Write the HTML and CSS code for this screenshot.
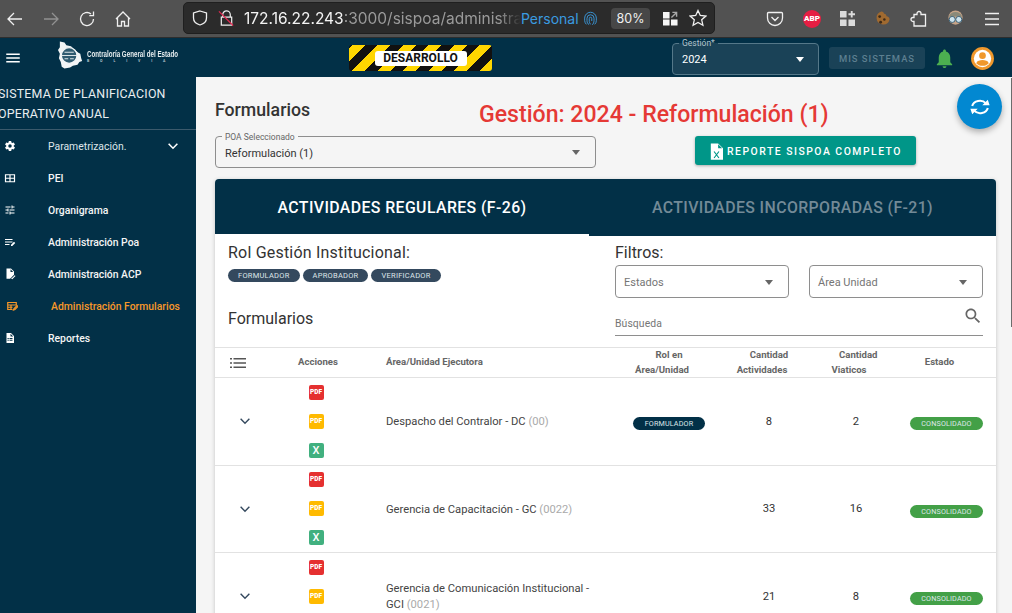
FILE: index.html
```html
<!DOCTYPE html>
<html lang="es">
<head>
<meta charset="utf-8">
<title>SISPOA</title>
<link rel="stylesheet" href="styles.css">
</head>
<body>
<div class="browser">
  <div class="nav-icons">
    <svg class="bi" viewBox="0 0 18 18"><path d="M16 9H2M8 3L2 9l6 6"/></svg>
    <svg class="bi bi-dim" viewBox="0 0 18 18"><path d="M2 9h14M10 3l6 6-6 6"/></svg>
    <svg class="bi" viewBox="0 0 18 18"><path d="M15.500 9A6.500 6.500 0 1 1 13 3.900M15.500 1.500v4.200h-4.200"/></svg>
    <svg class="bi" viewBox="0 0 18 18"><path d="M2 9l7-7 7 7M3.500 7.500V16h4v-4.500h3V16h4V7.500"/></svg>
  </div>
  <div class="urlbar">
    <svg class="bi ub-shield" viewBox="0 0 18 18"><path d="M9 2l6.500 2v5c0 3.500-2.500 5.800-6.500 7-4-1.200-6.500-3.500-6.500-7V4z"/></svg>
    <svg class="bi ub-lock" viewBox="0 0 18 18"><path d="M5 8V5.500a4 4 0 0 1 8 0V8M3.500 8h11v8.500h-11z"/><path class="slash" d="M1 2l15 15"/></svg>
    <div class="url"><span class="url-host">172.16.22.243</span>:3000/sispoa/administra</div>
    <span class="personal">Personal</span>
    <svg class="bi ub-finger" viewBox="0 0 18 18"><path d="M9 1.500a7 7 0 0 1 7 7v3a6 6 0 0 1-2 4.500M9 1.500a7 7 0 0 0-7 7v3a7 7 0 0 0 2 4.500M9 4.500a4.200 4.200 0 0 1 4.200 4.200v3c0 2-.8 3.500-2 4.800M9 4.500a4.200 4.200 0 0 0-4.200 4.200v3c0 2 .8 3.500 2.500 4.800M9 7.500a1.500 1.500 0 0 1 1.500 1.500v3M9 7.500A1.500 1.500 0 0 0 7.500 9v3.500c0 1 .5 2 1.500 3.500"/></svg>
    <span class="zoom">80%</span>
    <svg class="ub-grid" viewBox="0 0 16 16"><path d="M0 1h7v7H0zM0 9h7v6.500H0zM8.500 9H15.500v6.500H8.500z"/><path class="grid-arrow" d="M9 7l5.500-5.500M10 1.500h4.500V6"/></svg>
    <svg class="bi ub-star" viewBox="0 0 18 18"><path d="M9 1.500l2.300 5 5.500.6-4.100 3.700 1.200 5.400L9 13.400l-4.900 2.800 1.200-5.400L1.200 7.100l5.500-.6z"/></svg>
  </div>
  <div class="ext-icons">
    <svg class="bi" viewBox="0 0 18 18"><path d="M2.500 2.500h13a1 1 0 0 1 1 1V8a7.500 7.500 0 0 1-15 0V3.500a1 1 0 0 1 1-1zM5.500 7L9 10.500 12.500 7"/></svg>
    <span class="abp">ABP</span>
    <svg class="ext-grid" viewBox="0 0 16 16"><path d="M0 0h7v7H0zM0 9h7v7H0zM9 9h7v7H9zM11.500 0h2v2.500H16v2h-2.500V7h-2V4.500H9v-2h2.500z"/></svg>
    <svg class="ext-cookie" viewBox="0 0 18 18"><path class="ck" d="M8 1.500c1.500 0 2.500 1 2.700 2.500 2 .2 2.500 1.800 2.500 2.700 1.700.1 3.300 1.300 3.300 3.300A7 7 0 1 1 8 1.500z"/><circle cx="6" cy="7" r="1.500"/><circle cx="11" cy="10" r="1.300"/><circle cx="7" cy="13" r="1.500"/></svg>
    <svg class="bi" viewBox="0 0 18 18"><path d="M7 4.500V3.500a2 2 0 0 1 4 0v1h4.500V16H4v-4.500H3a2 2 0 0 1 0-4h1v-3z"/></svg>
    <svg class="ext-glasses" viewBox="0 0 18 18"><circle class="gf" cx="9" cy="8" r="7.500"/><path class="gh" d="M2 7a7.500 7.500 0 0 1 14 0z"/><circle class="gl" cx="5.500" cy="10" r="3.200"/><circle class="gl" cx="12.500" cy="10" r="3.200"/></svg>
    <svg class="bi" viewBox="0 0 18 18"><path d="M2 3.500h14M2 9h14M2 14.500h14"/></svg>
  </div>
</div>

<header class="appbar">
  <svg class="hamb" viewBox="0 0 24 24"><path d="M3 18h18v-2H3v2zm0-5h18v-2H3v2zm0-7v2h18V6H3z"/></svg>
  <div class="logo">
    <svg class="logo-mark" viewBox="0 0 28 32"><path class="lm-land" d="M2 1l5 1 2 3 5 1 3 3 5 4 2 1 1 5 1 3-3 1-2 3-5 1-3 2-6 1-3-2-1-5-2-4 1-5-2-4 2-3z"/><circle class="lm-ring" cx="12" cy="16" r="8.500"/><path class="lm-line" d="M3.500 16h17M7 12.500h10M7 19.500h4M13 19.500h4"/></svg>
    <div class="logo-text">
      <div class="logo-name">Contraloría General del Estado</div>
      <div class="logo-sub">B O L I V I A</div>
    </div>
  </div>
  <div class="dev-banner"><span class="dev-label">DESARROLLO</span></div>
  <div class="gestion">
    <span class="gestion-label">Gestión*</span>
    <span class="gestion-value">2024</span>
    <span class="caret caret-white"></span>
  </div>
  <button class="mis">MIS SISTEMAS</button>
  <svg class="bell" viewBox="0 0 24 24"><path d="M12 22c1.100 0 2-.9 2-2h-4c0 1.100.9 2 2 2zm6-6v-5c0-3.070-1.630-5.640-4.500-6.320V4c0-.83-.67-1.500-1.500-1.500s-1.500.67-1.500 1.500v.68C7.640 5.360 6 7.920 6 11v5l-2 2v1h16v-1l-2-2z"/></svg>
  <svg class="avatar" viewBox="0 0 24 24"><circle class="av-bg" cx="12" cy="12" r="11"/><circle class="av-fg" cx="12" cy="12" r="8.300"/><circle class="av-bg" cx="12" cy="9.300" r="3.200"/><path class="av-bg" d="M6 16.500c.8-2.300 3.500-3 6-3s5.200.7 6 3c-1.300 1.500-3.500 2.500-6 2.500s-4.700-1-6-2.500z"/></svg>
</header>

<div class="layout">
  <aside class="sidebar">
    <div class="side-title"><span class="side-title-text">SISTEMA DE PLANIFICACION<br>OPERATIVO ANUAL</span></div>
    <nav class="menu">
      <div class="mi">
        <svg class="mi-ic" viewBox="0 0 24 24"><path d="M12 15.500A3.500 3.500 0 0 1 8.500 12 3.500 3.500 0 0 1 12 8.500a3.500 3.500 0 0 1 3.500 3.500 3.500 3.500 0 0 1-3.500 3.500m7.430-2.530c.04-.32.07-.64.07-.97s-.03-.66-.07-1l2.110-1.630c.19-.15.24-.42.12-.64l-2-3.460c-.12-.22-.39-.31-.61-.22l-2.490 1c-.52-.39-1.060-.73-1.690-.98l-.37-2.650A.5.500 0 0 0 14 2h-4c-.25 0-.46.18-.5.420l-.37 2.650c-.63.25-1.170.59-1.690.98l-2.490-1c-.22-.09-.49 0-.61.22l-2 3.460c-.13.22-.07.49.12.64L4.570 11c-.04.34-.07.67-.07 1s.03.65.07.97l-2.110 1.660c-.19.15-.25.42-.12.64l2 3.460c.12.22.39.3.61.22l2.490-1.010c.52.4 1.060.74 1.690.99l.37 2.650c.04.24.25.42.5.42h4c.25 0 .46-.18.5-.42l.37-2.650c.63-.26 1.170-.59 1.690-.99l2.490 1.010c.22.08.49 0 .61-.22l2-3.460c.12-.22.07-.49-.12-.64z"/></svg>
        <span class="mi-label mi-light">Parametrización.</span>
        <svg class="mi-chev" viewBox="0 0 16 16"><path d="M3 5.500l5 5 5-5"/></svg>
      </div>
      <div class="mi">
        <svg class="mi-ic mi-ic-line" viewBox="0 0 24 24"><path d="M3 5.500h18v14H3zM3 12.500h18M12 5.500v14"/></svg>
        <span class="mi-label">PEI</span>
      </div>
      <div class="mi">
        <svg class="mi-ic" viewBox="0 0 24 24"><path d="M3 17v2h6v-2H3zM3 5v2h10V5H3zm10 16v-2h8v-2h-8v-2h-2v6h2zM7 9v2H3v2h4v2h2V9H7zm14 4v-2H11v2h10zm-6-4h2V7h4V5h-4V3h-2v6z"/></svg>
        <span class="mi-label">Organigrama</span>
      </div>
      <div class="mi">
        <svg class="mi-ic" viewBox="0 0 24 24"><path d="M2 6h15v2H2zM2 11h15v2H2zM2 16h9v2H2zM14 20v-2.500l6-6 2.500 2.500-6 6z"/></svg>
        <span class="mi-label">Administración Poa</span>
      </div>
      <div class="mi">
        <svg class="mi-ic" viewBox="0 0 24 24"><path d="M5 1h9l6 6v6.500l-8 8H5zM13 2.500V8h5.500zM14 20l2.500-.5 5-5L23 16l-6.500 6.500z"/></svg>
        <span class="mi-label">Administración ACP</span>
      </div>
      <div class="mi mi-active">
        <svg class="mi-ic mi-ic-line" viewBox="0 0 24 24"><path d="M13 19H3.500V5h17v5M3.500 10h17M3.500 14.500H13M10 10v9M15 20l1-3 6-6 2 2-6 6z"/></svg>
        <span class="mi-label">Administración Formularios</span>
      </div>
      <div class="mi">
        <svg class="mi-ic" viewBox="0 0 24 24"><path d="M14 2H5v20h15V8l-6-6zM13 3.500L18.500 9H13zM7 12h2.500v2H7zm4 0h6v2h-6zm-4 3.500h2.500v2H7zm4 0h6v2h-6z" fill-rule="evenodd"/></svg>
        <span class="mi-label">Reportes</span>
      </div>
    </nav>
  </aside>

  <main class="main">
    <div class="head-row">
      <h1 class="page-title">Formularios</h1>
      <div class="gestion-title">Gestión: 2024 - Reformulación (1)</div>
    </div>
    <div class="controls-row">
      <div class="poa">
        <span class="poa-label">POA Seleccionado</span>
        <span class="poa-value">Reformulación (1)</span>
        <span class="caret"></span>
      </div>
      <button class="report">
        <svg class="report-ic" viewBox="0 0 16 20"><path d="M1 0h9l6 6v14H1zM10 1v5h5z" fill-rule="evenodd"/><path class="report-x" d="M5 10l6 8M11 10l-6 8"/></svg>
        REPORTE SISPOA COMPLETO
      </button>
    </div>

    <section class="card">
      <div class="tabs">
        <div class="tab tab-active">ACTIVIDADES REGULARES (F-26)</div>
        <div class="tab">ACTIVIDADES INCORPORADAS (F-21)</div>
      </div>
      <div class="filters">
        <div class="roles">
          <div class="sub-title sub-role">Rol Gestión Institucional:</div>
          <div class="chips">
            <span class="chip">FORMULADOR</span>
            <span class="chip">APROBADOR</span>
            <span class="chip">VERIFICADOR</span>
          </div>
          <div class="sub-title forms-title">Formularios</div>
        </div>
        <div class="filter-box">
          <div class="sub-title">Filtros:</div>
          <div class="selects">
            <div class="fsel">Estados<span class="caret"></span></div>
            <div class="fsel">Área Unidad<span class="caret"></span></div>
          </div>
          <div class="search">
            <span>Búsqueda</span>
            <svg class="search-ic" viewBox="0 0 24 24"><path d="M15.500 14h-.79l-.28-.27C15.410 12.590 16 11.110 16 9.500 16 5.910 13.090 3 9.500 3S3 5.910 3 9.500 5.910 16 9.500 16c1.610 0 3.090-.59 4.230-1.570l.27.28v.79l5 4.990L20.490 19l-4.990-5zm-6 0C7.010 14 5 11.990 5 9.500S7.010 5 9.500 5 14 7.010 14 9.500 11.990 14 9.500 14z"/></svg>
          </div>
        </div>
      </div>

      <table class="tbl">
        <colgroup>
          <col class="c1"><col class="c2"><col class="c3"><col class="c4"><col class="c5"><col class="c6"><col class="c7">
        </colgroup>
        <thead>
          <tr>
            <th class="th-list"><svg class="list-ic" viewBox="0 0 16 10"><path d="M0 0h2v1.400H0zM3.500 0H16v1.400H3.500zM0 4.300h2v1.400H0zM3.500 4.300H16v1.400H3.500zM0 8.600h2V10H0zM3.500 8.600H16V10H3.500z"/></svg></th>
            <th>Acciones</th>
            <th class="th-left">Área/Unidad Ejecutora</th>
            <th class="th-two"><span class="first">Rol en</span><span>Área/Unidad</span></th>
            <th class="th-two"><span class="first">Cantidad</span><span>Actividades</span></th>
            <th class="th-two"><span class="first">Cantidad</span><span>Viaticos</span></th>
            <th class="th-estado">Estado</th>
          </tr>
        </thead>
        <tbody>
          <tr>
            <td><svg class="row-chev" viewBox="0 0 16 16"><path d="M3 5.500l5 5 5-5"/></svg></td>
            <td><div class="acts"><span class="act act-red">PDF</span><span class="act act-yellow">PDF</span><span class="act act-green">X</span></div></td>
            <td class="area">Despacho del Contralor - DC <span class="code">(00)</span></td>
            <td><span class="badge badge-dark">FORMULADOR</span></td>
            <td>8</td>
            <td>2</td>
            <td class="td-estado"><span class="badge badge-green">CONSOLIDADO</span></td>
          </tr>
          <tr>
            <td><svg class="row-chev" viewBox="0 0 16 16"><path d="M3 5.500l5 5 5-5"/></svg></td>
            <td><div class="acts"><span class="act act-red">PDF</span><span class="act act-yellow">PDF</span><span class="act act-green">X</span></div></td>
            <td class="area">Gerencia de Capacitación - GC <span class="code">(0022)</span></td>
            <td></td>
            <td>33</td>
            <td>16</td>
            <td class="td-estado"><span class="badge badge-green">CONSOLIDADO</span></td>
          </tr>
          <tr>
            <td><svg class="row-chev" viewBox="0 0 16 16"><path d="M3 5.500l5 5 5-5"/></svg></td>
            <td><div class="acts"><span class="act act-red">PDF</span><span class="act act-yellow">PDF</span><span class="act act-green">X</span></div></td>
            <td class="area">Gerencia de Comunicación Institucional - GCI <span class="code">(0021)</span></td>
            <td></td>
            <td>21</td>
            <td>8</td>
            <td class="td-estado"><span class="badge badge-green">CONSOLIDADO</span></td>
          </tr>
        </tbody>
      </table>
    </section>
  </main>
</div>

<button class="fab" aria-label="Actualizar">
  <svg viewBox="0 0 24 24"><path d="M3.500 11a8.500 7 0 0 1 15-3M20.500 13a8.500 7 0 0 1-15 3"/><path class="fab-head" d="M14.500 10h8l-2-6zM9.500 14h-8l2 6z"/></svg>
</button>
<div class="scroll-thumb"></div>
</body>
</html>
```
FILE: styles.css
```css
* { box-sizing: border-box; }
html, body { margin: 0; padding: 0; }
body {
  width: 1012px;
  height: 613px;
  overflow: hidden;
  position: relative;
  font-family: Roboto, "Liberation Sans", sans-serif;
  background: #f5f5f5;
  color: #333;
}

/* browser chrome */
.browser {
  height: 38px;
  background: #525252;
  display: flex;
  align-items: center;
  border-bottom: 1px solid #2e2e2e;
  color: #f5f5f5;
}
.bi { width: 18px; height: 18px; fill: none; stroke: #f0f0f0; stroke-width: 1.3; flex: none; }
.bi-dim { opacity: .4; }
.nav-icons { display: flex; gap: 18px; padding-left: 6px; width: 183px; }
.urlbar {
  width: 532px;
  height: 32px;
  margin-top: -1px;
  background: #2b2b2b;
  border: 1px solid #1f1f1f;
  border-radius: 5px;
  display: flex;
  align-items: center;
  padding-left: 7px;
}
.ub-shield { margin-right: 9px; }
.ub-lock { width: 17px; margin-right: 9px; }
.slash { stroke: #e22850; }
.url {
  width: 277px;
  overflow: hidden;
  white-space: nowrap;
  font-family: Inter, Roboto, sans-serif;
  font-size: 15.500px;
  color: #9a9a9a;
  -webkit-mask-image: linear-gradient(90deg, #000 92%, transparent 100%);
  mask-image: linear-gradient(90deg, #000 92%, transparent 100%);
}
.url-host { color: #f4f4f4; }
.personal { font-family: Inter, Roboto, sans-serif; font-size: 14px; color: #3a9be0; width: 62px; }
.ub-finger { stroke: #3a9be0; width: 15px; height: 17px; stroke-width: 1.100; margin-right: 13px; }
.zoom {
  width: 39px;
  height: 21px;
  line-height: 21px;
  text-align: center;
  border-radius: 4px;
  background: #474747;
  font-family: Inter, Roboto, sans-serif;
  font-size: 12.500px;
  color: #f0f0f0;
}
.ub-grid { width: 15px; height: 15px; fill: #f5f5f5; margin-left: 13px; }
.grid-arrow { fill: none; stroke: #a8a8a8; stroke-width: 1.500; }
.ub-star { margin-left: 11px; }
.ext-icons { flex: 1; display: flex; align-items: center; justify-content: space-between; padding: 0 11px 0 51px; }
.abp {
  width: 18px; height: 18px; border-radius: 50%;
  background: #e61e43; color: #fff;
  font: 900 8px/18px Roboto, sans-serif; text-align: center;
}
.ext-grid { width: 15px; height: 15px; fill: #dcdcdc; }
.ext-cookie { width: 17px; height: 17px; fill: #3c2a18; }
.ck { fill: #a06a30; }
.ext-glasses { width: 17px; height: 17px; }
.gf { fill: #c7a488; }
.gh { fill: #8a8a7a; }
.gl { fill: #cfe4ee; stroke: #356078; stroke-width: 1; }

/* app bar */
.appbar {
  height: 39px;
  background: #023047;
  display: flex;
  align-items: center;
  position: relative;
}
.hamb { width: 18px; height: 18px; fill: #fff; margin-left: 4px; margin-top: 1px; flex: none; }
.logo { display: flex; align-items: center; margin-left: 36px; width: 291px; height: 32px; flex: none; margin-top: -4px; }
.logo-mark { width: 26px; height: 31px; flex: none; margin-right: 3px; }
.lm-land { fill: #f2f5f6; }
.lm-ring { fill: #2f5b70; stroke: #f2f5f6; stroke-width: 1.500; }
.lm-line { fill: none; stroke: #e8eef0; stroke-width: 1; }
.logo-text { color: #e8eef0; width: 92px; }
.logo-name { font: 700 9px/10px "Liberation Sans", sans-serif; white-space: nowrap; transform: scaleX(.69); transform-origin: left center; }
.logo-sub { font: 700 3.500px/4px Roboto, sans-serif; letter-spacing: 5px; color: #b7c4cb; white-space: nowrap; }
.dev-banner {
  width: 143px;
  height: 26px;
  border-radius: 3px;
  flex: none;
  margin-top: 1px;
  display: flex;
  align-items: center;
  justify-content: center;
  background: repeating-linear-gradient(-45deg, #ffd600 0 9px, #111 9px 18px);
}
.dev-label {
  width: 92px; height: 15px;
  background: #fff; color: #111;
  border-radius: 3px;
  font-weight: 700; font-size: 12px; line-height: 15px;
  text-align: center;
}
.gestion {
  margin-left: 180px;
  width: 147px;
  height: 32px;
  flex: none;
  position: relative;
  background: #1a4257;
  border: 1px solid #557889;
  border-radius: 4px;
  margin-top: 3px;
}
.gestion-label {
  position: absolute; left: 6px; top: -6px;
  padding: 0 3px;
  font-size: 8.500px; line-height: 10px; color: #b4c4cc;
  background: linear-gradient(#023047 50%, #1a4257 50%);
}
.gestion-value { position: absolute; left: 9px; top: 9px; font-size: 11px; line-height: 13px; color: #fff; }
.caret {
  position: absolute; right: 15px; top: 50%;
  margin-top: -2px;
  border: 4px solid transparent; border-bottom: 0; border-top: 5px solid #666;
}
.caret-white { border-top-color: #fff; right: 14px; }
.mis {
  margin-left: 10px; margin-top: 1px;
  width: 96px; height: 22px;
  flex: none;
  background: #1a4257;
  border: 0; border-radius: 3px;
  color: #5d7f90;
  font-family: inherit; font-size: 9.400px; font-weight: 500; letter-spacing: 1px;
  padding: 0;
}
.bell { width: 23px; height: 23px; fill: #4caf50; margin-left: 8px; flex: none; margin-top: 1px; }
.avatar { width: 25px; height: 25px; margin-left: 14px; flex: none; margin-top: 1px; }
.av-bg { fill: #f0982c; }
.av-fg { fill: #fff; }

/* shell */
.layout { display: flex; height: 536px; }
.sidebar { width: 196px; flex: none; background: #023047; color: #fff; overflow: hidden; }
.side-title {
  height: 53px;
  padding-top: 7px;
  font-size: 12.400px;
  line-height: 19.500px;
  letter-spacing: .2px;
  color: #e9eef0;
  border-bottom: 1px solid #3c5a6c;
}
.side-title-text { display: block; margin-left: -2px; }
.menu { display: flex; flex-direction: column; }
.mi { height: 32px; display: flex; align-items: center; position: relative; font-size: 10.400px; font-weight: 500; }
.mi-ic { width: 12px; height: 12px; fill: #fff; flex: none; margin: 0 32px 0 4px; }
.mi-ic-line { fill: none; stroke: #fff; stroke-width: 2.400; }
.mi-label { white-space: nowrap; color: #f5f5f5; }
.mi-light { font-weight: 400; color: #dfe6ea; }
.mi-chev { position: absolute; left: 166px; width: 14px; height: 14px; fill: none; stroke: #fff; stroke-width: 1.800; }
.mi-active .mi-ic { stroke: #f7982a; margin: 0 33px 0 6px; }
.mi-active .mi-label { color: #f7982a; }

.main { flex: 1; padding: 22px 16px 0 19px; min-width: 0; }
.head-row { display: flex; align-items: center; height: 30px; }
.page-title { margin: -8px 0 0; width: 264px; font-size: 17.700px; font-weight: 500; color: #333; }
.gestion-title { font-size: 23.100px; font-weight: 500; color: #e53935; white-space: nowrap; }
.controls-row { display: flex; margin-top: 7px; height: 36px; }
.poa {
  position: relative;
  width: 381px; height: 32px;
  border: 1px solid #8e8e8e;
  border-radius: 4px;
}
.poa-label {
  position: absolute; left: 6px; top: -5px;
  padding: 0 3px;
  background: #f5f5f5;
  font-size: 8.500px; line-height: 10px; color: #666;
}
.poa-value { position: absolute; left: 9px; top: 10px; font-size: 11px; line-height: 13px; color: #333; }
.report {
  margin-left: 99px;
  width: 221px; height: 29px;
  background: #009688;
  color: #fff;
  border: 0; border-radius: 3px;
  box-shadow: 0 1px 3px rgba(0,0,0,.3);
  font-family: inherit; font-size: 10.400px; font-weight: 500; letter-spacing: 1.500px;
  display: flex; align-items: center; justify-content: center; gap: 4px;
  padding: 1px 0 0 1px;
}
.report-ic { width: 13px; height: 17px; fill: #fff; flex: none; }
.report-x { stroke: #009688; stroke-width: 1.400; fill: none; }

.card {
  margin-top: 7px;
  width: 781px;
  background: #fff;
  border-radius: 4px 4px 0 0;
  box-shadow: 0 1px 4px rgba(0,0,0,.2);
  height: 440px;
  overflow: hidden;
}
.tabs { display: flex; height: 57px; background: #023047; }
.tab {
  flex: 1;
  height: 57px;
  text-align: center;
  line-height: 57px;
  font-size: 15.850px;
  font-weight: 500;
  letter-spacing: .4px;
  color: #738a97;
  white-space: nowrap;
}
.tab-active { flex: none; width: 374px; color: #fff; border-bottom: 2px solid #fff; }
.filters { display: flex; height: 111px; padding: 7px 13px 0; }
.roles { width: 387px; }
.sub-title { font-size: 16px; line-height: 20px; color: #333; }
.sub-role { letter-spacing: .2px; }
.chips { display: flex; gap: 3px; margin-top: 6px; }
.chip {
  height: 13px; line-height: 13px;
  padding: 0 10px;
  border-radius: 7px;
  background: #34495e;
  color: #dfe6ea;
  font-size: 7.500px;
  letter-spacing: .25px;
}
.forms-title { margin-top: 27px; }
.filter-box { width: 368px; }
.selects { display: flex; gap: 20px; margin-top: 2px; }
.fsel {
  position: relative;
  width: 174px; height: 33px;
  border: 1px solid #8e8e8e;
  border-radius: 4px;
  padding-left: 8px;
  font-size: 11px; line-height: 33px; color: #757575;
}
.search {
  position: relative;
  height: 38px;
  border-bottom: 1px solid #8e8e8e;
  font-size: 10.400px; color: #757575;
  padding-top: 19px; line-height: 13px;
  letter-spacing: .1px;
}
.search-ic { position: absolute; right: 0; top: 8px; width: 20px; height: 20px; fill: #666; }

.tbl { width: 100%; border-collapse: collapse; table-layout: fixed; font-size: 11.200px; }
.c1 { width: 60px; } .c2 { width: 86px; } .c3 { width: 264px; } .c4 { width: 88px; }
.c5 { width: 112px; } .c6 { width: 62px; } .c7 { width: 109px; }
.tbl thead tr { height: 30px; border-top: 1px solid #e2e2e2; border-bottom: 1px solid #e2e2e2; }
.tbl th { padding: 0; font-size: 9.600px; font-weight: 700; color: #666; line-height: 14.500px; text-align: center; }
.tbl .th-list { text-align: left; padding-left: 15px; }
.list-ic { display: block; width: 16px; height: 10px; fill: #555; }
.tbl .th-left { text-align: left; padding-left: 25px; }
.tbl .th-two { padding-right: 14px; }
.tbl .th-estado { padding-right: 4px; }
.th-two span { display: block; }
.th-two .first { padding-left: 14px; }
.tbl tbody tr { height: 87.500px; border-bottom: 1px solid #e2e2e2; }
.tbl td { padding: 0; text-align: center; color: #333; vertical-align: middle; }
.row-chev { width: 14px; height: 14px; fill: none; stroke: #34495e; stroke-width: 1.600; display: block; margin: 0 auto; }
.acts { display: flex; flex-direction: column; align-items: center; gap: 14px; padding-right: 4px; }
.act {
  width: 15px; height: 15px;
  border-radius: 2px;
  color: #fff;
  font-size: 6.500px; font-weight: 900; line-height: 15px;
  text-align: center;
}
.act-red { background: #e53030; }
.act-yellow { background: #ffba00; }
.act-green { background: #41b07f; font-size: 11px; font-weight: 500; }
.tbl .area { text-align: left; padding: 2px 30px 0 25px; line-height: 16px; color: #444; }
.code { color: #aaa; }
.tbl .td-estado { padding-left: 10px; }
.badge {
  display: inline-block;
  height: 13px; line-height: 13px;
  border-radius: 7px;
  font-size: 7.200px;
  letter-spacing: .15px;
  color: #dfe6ea;
  vertical-align: middle;
  text-align: center;
}
.badge-dark { width: 72px; background: #023047; margin-top: 4px; }
.badge-green { width: 73px; background: #43a047; margin-top: 5px; }

/* overlays */
.fab {
  position: absolute;
  left: 957px; top: 84px;
  width: 45px; height: 45px;
  border-radius: 50%;
  border: 0; padding: 0;
  background: #0288d1;
  box-shadow: 0 3px 6px rgba(0,0,0,.3);
  display: flex; align-items: center; justify-content: center;
}
.fab svg { width: 22px; height: 22px; margin-top: 1px; fill: none; stroke: #fff; stroke-width: 2.200; }
.fab .fab-head { fill: #fff; stroke: none; }
.scroll-thumb { position: absolute; left: 1011px; top: 78px; width: 1px; height: 249px; background: #6c6c6c; }
```
